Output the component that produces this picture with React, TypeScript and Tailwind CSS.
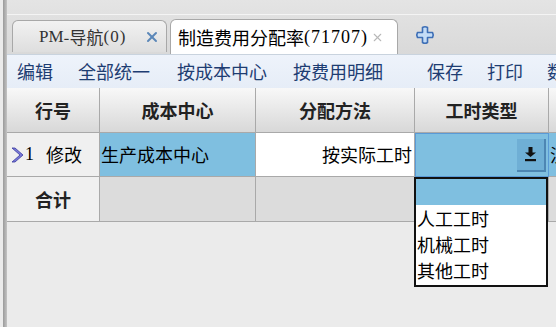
import { X } from 'lucide-react';

const FONT = { fontFamily: '"Noto Sans CJK SC", "Liberation Sans", sans-serif' };
const SERIF = { fontFamily: '"Liberation Serif", "Noto Sans CJK SC", serif' };

const TOOLS = [
  { label: '编辑', w: 'w-[61px]' },
  { label: '全部统一', w: 'w-[99px]' },
  { label: '按成本中心', w: 'w-[116px]' },
  { label: '按费用明细', w: 'w-[134px]' },
  { label: '保存', w: 'w-[60px]' },
  { label: '打印', w: 'w-[60px]' },
  { label: '数据', w: 'w-[60px]' },
];

const HOURS = ['人工工时', '机械工时', '其他工时'];

export default function App() {
  return (
    <div className="w-[556px] h-[327px] overflow-hidden bg-[#ebebeb] flex" style={FONT}>
      <div className="w-[3px] bg-[#ebebeb] shrink-0" />
      <div className="w-[4px] bg-gradient-to-r from-[#9a9a9a] to-[#c4c4c4] shrink-0" />
      <div className="flex-1 flex flex-col min-w-0">
        {/* tab strip */}
        <div className="h-[55px] bg-gradient-to-b from-[#e4e4e4] to-[#d9d9d9] flex items-end relative border-b border-[#c9d3de]">
          <div className="absolute top-[14px] left-0 right-0 h-px bg-[#f4f4f4]" />
          <div className="ml-[5px] w-[155px] h-[32px] mb-[2px] rounded-t-[6px] border border-b-0 border-[#a8a8a8] bg-gradient-to-b from-[#f2f2f2] to-[#dedede] flex items-center pl-[26px] text-[17px] text-[#333]">
            <span style={SERIF}>PM</span>
            <span>-导航</span>
            <span className="tracking-[1px]" style={SERIF}>(0)</span>
            <X size={16} strokeWidth={3} className="ml-[18px] text-[#5b87b8]" />
          </div>
          <div className="ml-[3px] w-[228px] h-[35px] rounded-t-[6px] border border-b-0 border-[#a8a8a8] bg-white flex items-center pl-[7px] text-[18px] text-black">
            <span>制造费用分配率</span>
            <span className="text-[18px] tracking-[1px]" style={SERIF}>(71707)</span>
            <X size={13} strokeWidth={2} className="ml-[3px] text-[#b8b8b8]" />
          </div>
          <svg width="20" height="20" viewBox="0 0 20 20" className="ml-[17px] mb-[9px]">
            <path
              d="M7.5 2.5 Q10 1 12.5 2.5 V7.5 H17.5 Q19 10 17.5 12.5 H12.5 V17.5 Q10 19 7.5 17.5 V12.5 H2.5 Q1 10 2.5 7.5 H7.5 Z"
              fill="#c4dcf6"
              stroke="#3e6fb6"
              strokeWidth="1.6"
              strokeLinejoin="round"
            />
          </svg>
        </div>
        {/* toolbar */}
        <div className="h-[33px] bg-gradient-to-b from-[#eef3fb] to-[#e6edf7] flex items-center text-[18px] text-[#1e3d72] whitespace-nowrap">
          {TOOLS.map((t) => (
            <div key={t.label} className={`${t.w} shrink-0 pl-[10px]`}>{t.label}</div>
          ))}
        </div>
        {/* grid */}
        <div className="relative">
          <div className="flex h-[45px] text-[18px] font-bold text-[#222]">
            {[
              ['行号', 'w-[93px]'],
              ['成本中心', 'w-[156px]'],
              ['分配方法', 'w-[159px]'],
              ['工时类型', 'w-[134px]'],
              ['', 'w-[40px]'],
            ].map(([h, w]) => (
              <div key={h || 'x'} className={`${w} shrink-0 border-r border-b border-[#a9a9a9] bg-gradient-to-b from-[#f8f8f8] to-[#d8d8d8] flex items-center justify-center`}>
                {h}
              </div>
            ))}
          </div>
          <div className="flex h-[44px] text-[18px] text-black">
            <div className="w-[93px] shrink-0 border-r border-b border-[#a9a9a9] bg-[#f0f0f0] flex items-center pl-[4px]">
              <svg width="12" height="16" viewBox="0 0 12 16" className="mr-[2px]">
                <path d="M1 1 L9 8 L1 15 L4 15 L12 8 L4 1 Z" fill="#7a7ad8" stroke="#3a3aa0" strokeWidth="0.8" />
              </svg>
              <span style={SERIF}>1</span>
              <span className="ml-[12px]">修改</span>
            </div>
            <div className="w-[156px] shrink-0 border-r border-b border-[#a9a9a9] bg-[#7fbfe0] flex items-center pl-[1px]">生产成本中心</div>
            <div className="w-[159px] shrink-0 border-r border-b border-[#a9a9a9] bg-white flex items-center justify-end pr-[2px]">按实际工时</div>
            <div className="w-[134px] shrink-0 border border-[#5a9ad6] bg-[#7fbfe0] flex items-center justify-end pr-[2px]">
              <div className="w-[29px] h-[33px] bg-[#6fafd5] border-r-2 border-b-2 border-[#4d86b3] flex items-center justify-center">
                <svg width="13" height="16" viewBox="0 0 13 16">
                  <path d="M4.5 1 H8.5 V6.5 H12 L6.5 11 L1 6.5 H4.5 Z" fill="#111" />
                  <rect x="1" y="13" width="11" height="2.2" fill="#111" />
                </svg>
              </div>
            </div>
            <div className="w-[40px] shrink-0 border-b border-[#a9a9a9] bg-[#7fbfe0] flex items-center pl-[1px] overflow-hidden">汉</div>
          </div>
          <div className="flex h-[45px] text-[18px]">
            <div className="w-[93px] shrink-0 border-r border-b border-[#a9a9a9] bg-[#f0f0f0] flex items-center justify-center font-bold text-[#222]">合计</div>
            <div className="w-[156px] shrink-0 border-r border-b border-[#a9a9a9] bg-[#dcdcdc]" />
            <div className="w-[159px] shrink-0 border-r border-b border-[#a9a9a9] bg-[#dcdcdc]" />
            <div className="w-[134px] shrink-0 border-r border-b border-[#a9a9a9] bg-[#dcdcdc]" />
            <div className="w-[40px] shrink-0 border-b border-[#a9a9a9] bg-[#dcdcdc]" />
          </div>
          {/* dropdown list */}
          <div className="absolute left-[407px] top-[89px] w-[134px] border-2 border-[#111] bg-white text-[18px] text-black leading-[26px] pb-[2px]">
            <div className="h-[26px] bg-[#7fbfe0]" />
            {HOURS.map((h) => (
              <div key={h} className="pl-[1px]">{h}</div>
            ))}
          </div>
        </div>
      </div>
    </div>
  );
}
